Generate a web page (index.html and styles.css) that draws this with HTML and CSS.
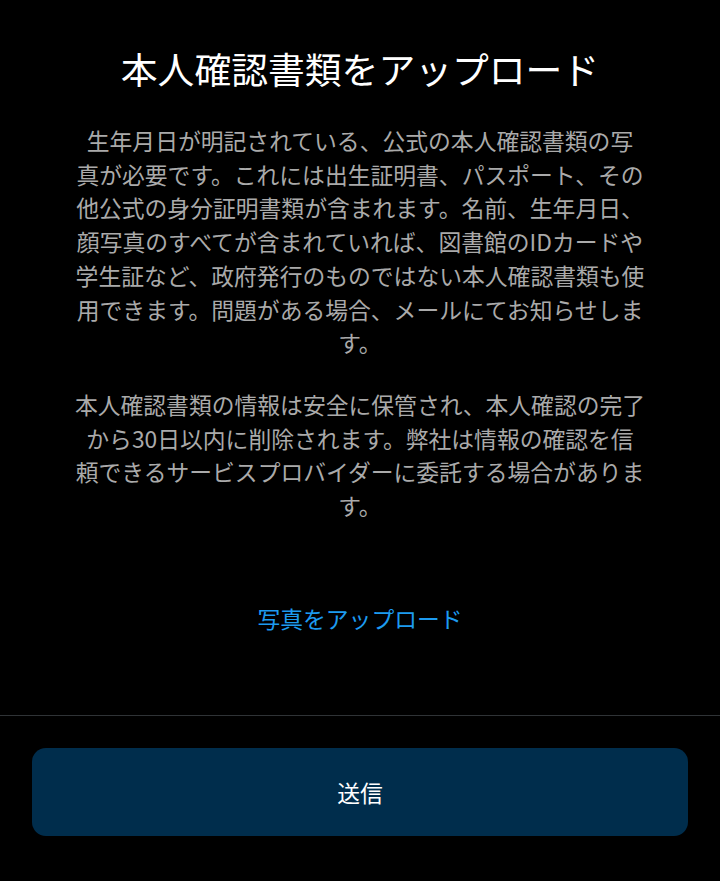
FILE: index.html
```html
<!DOCTYPE html>
<html lang="ja">
<head>
    <meta charset="UTF-8" />
    <meta name="viewport" content="width=device-width, initial-scale=1.0"/>
    <title>本人確認書類をアップロード</title>
    <link rel="stylesheet" href="styles.css">
</head>
<body>
<div class="page">
    <div class="content">
        <h1 class="title">本人確認書類をアップロード</h1>
        <p class="desc">生年月日が明記されている、公式の本人確認書類の写<br>真が必要です。これには出生証明書、パスポート、その<br>他公式の身分証明書類が含まれます。名前、生年月日、<br>顔写真のすべてが含まれていれば、図書館のIDカードや<br>学生証など、政府発行のものではない本人確認書類も使<br>用できます。問題がある場合、メールにてお知らせしま<br>す。</p>
        <p class="desc">本人確認書類の情報は安全に保管され、本人確認の完了<br>から30日以内に削除されます。弊社は情報の確認を信<br>頼できるサービスプロバイダーに委託する場合がありま<br>す。</p>
        <a class="upload-link" href="#">写真をアップロード</a>
    </div>
    <div class="footer">
        <button class="submit" type="button">送信</button>
    </div>
</div>
</body>
</html>
```

FILE: styles.css
```css
* {
    margin: 0;
    padding: 0;
    box-sizing: border-box;
}
html, body {
    height: 100%;
    background: #000;
    font-family: "Noto Sans CJK JP", "Noto Sans", sans-serif;
    color: #fff;
}
.page {
    display: flex;
    flex-direction: column;
    height: 100%;
}
.content {
    flex: 1;
    display: flex;
    flex-direction: column;
    align-items: center;
    padding: 45px 30px 0;
    text-align: center;
}
.title {
    font-size: 36.8px;
    font-weight: 400;
    line-height: 47px;
    color: #fff;
    white-space: nowrap;
}
.desc {
    margin-top: 32px;
    font-size: 22.8px;
    line-height: 33.7px;
    color: #aaaaaa;
    white-space: nowrap;
}
.desc + .desc {
    margin-top: 28px;
}
.upload-link {
    margin-top: 79px;
    font-size: 22.8px;
    line-height: 33.7px;
    color: #1d9bf0;
    text-decoration: none;
}
.footer {
    border-top: 1px solid #2f3336;
    padding: 32px 32px 45px;
}
.submit {
    display: block;
    width: 100%;
    height: 88px;
    border: none;
    border-radius: 14px;
    background: #002d4c;
    color: #fff;
    font-family: "Noto Sans CJK JP", "Noto Sans", sans-serif;
    font-size: 22.8px;
    cursor: pointer;
}
```
